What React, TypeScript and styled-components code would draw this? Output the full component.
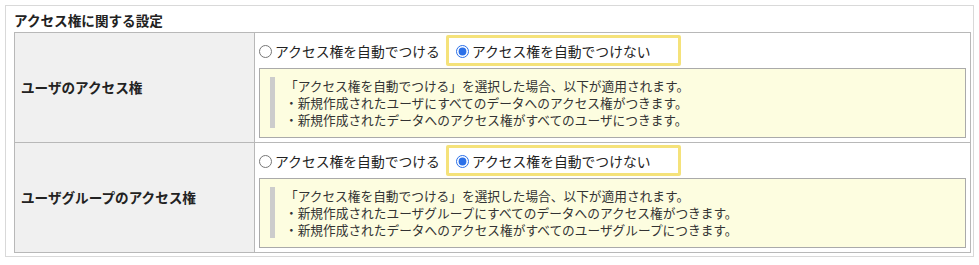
import styled, { createGlobalStyle } from 'styled-components';

const GlobalStyle = createGlobalStyle`
  body {
    margin: 0;
    background: #fff;
    font-family: Meiryo, "Noto Sans CJK JP", "Noto Sans", sans-serif;
    color: #222;
  }
`;

const Panel = styled.section`
  margin: 5px;
  width: 969px;
  box-sizing: border-box;
  border: 1px solid #d9d9d9;
  padding: 4px 3px 3px 8px;
`;

const Title = styled.h2`
  margin: 0 0 2px 0;
  font-size: 13.6px;
  font-weight: bold;
  line-height: 20px;
`;

const Table = styled.table`
  width: 957px;
  border-collapse: collapse;
  border: 1px solid #b8b8b8;
`;

const HeadCell = styled.th`
  width: 240px;
  box-sizing: border-box;
  background: #f0f0f0;
  border: 1px solid #b8b8b8;
  text-align: left;
  vertical-align: middle;
  padding: 0 6px 2px 6px;
  font-size: 13.6px;
  font-weight: bold;
`;

const BodyCell = styled.td`
  border: 1px solid #b8b8b8;
  padding: 2px 4px 4px 4px;
  vertical-align: top;
`;

const Options = styled.div`
  display: flex;
  align-items: center;
  gap: 3px;
  margin-bottom: 2px;
`;

const Option = styled.label<{ $selected?: boolean }>`
  display: flex;
  align-items: center;
  height: 31px;
  box-sizing: border-box;
  font-size: 13.8px;
  white-space: nowrap;
  padding: ${(p) => (p.$selected ? '0 27px 0 7px' : '0')};
  border: 3px solid ${(p) => (p.$selected ? '#f5e27a' : 'transparent')};
  border-left-width: ${(p) => (p.$selected ? '3px' : '0')};
  border-radius: 2px;

  input {
    width: 13px;
    height: 13px;
    margin: 1px 3px 0 0;
    accent-color: #2a6fe8;
  }
`;

const Note = styled.div`
  background: #fdfde0;
  border: 1px solid #aaaaaa;
  padding: 8px 10px 9px 10px;
`;

const NoteBody = styled.div`
  border-left: 5px solid #cccccc;
  padding-left: 10px;
  font-size: 12.7px;
  line-height: 17px;
  color: #333;
`;

type Row = { label: string; subject: string };

const rows: Row[] = [
  { label: 'ユーザのアクセス権', subject: 'ユーザ' },
  { label: 'ユーザグループのアクセス権', subject: 'ユーザグループ' },
];

function AccessRow({ row, name }: { row: Row; name: string }) {
  return (
    <tr>
      <HeadCell>{row.label}</HeadCell>
      <BodyCell>
        <Options>
          <Option>
            <input type="radio" name={name} />
            アクセス権を自動でつける
          </Option>
          <Option $selected>
            <input type="radio" name={name} defaultChecked />
            アクセス権を自動でつけない
          </Option>
        </Options>
        <Note>
          <NoteBody>
            <div>「アクセス権を自動でつける」を選択した場合、以下が適用されます。</div>
            <div>・新規作成された{row.subject}にすべてのデータへのアクセス権がつきます。</div>
            <div>・新規作成されたデータへのアクセス権がすべての{row.subject}につきます。</div>
          </NoteBody>
        </Note>
      </BodyCell>
    </tr>
  );
}

export default function App() {
  return (
    <>
      <GlobalStyle />
      <Panel>
        <Title>アクセス権に関する設定</Title>
        <Table>
          <tbody>
            {rows.map((row, i) => (
              <AccessRow key={row.label} row={row} name={`access-${i}`} />
            ))}
          </tbody>
        </Table>
      </Panel>
    </>
  );
}
